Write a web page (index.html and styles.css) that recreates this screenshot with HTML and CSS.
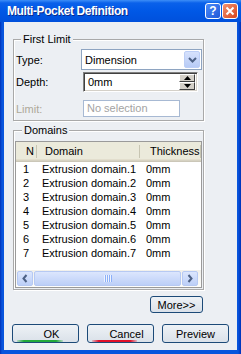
FILE: index.html
```html
<!DOCTYPE html>
<html lang="en">
<head>
<meta charset="UTF-8">
<meta name="viewport" content="width=device-width, initial-scale=1.0">
<title>Multi-Pocket Definition</title>
<link rel="stylesheet" href="styles.css">
</head>
<body>
<div class="window">
  <div class="titlebar">
    <span class="title">Multi-Pocket Definition</span>
    <div class="title-buttons">
      <span class="tbtn help">?</span>
      <span class="tbtn close">
        <svg width="10" height="10" viewBox="0 0 10 10"><path d="M1.5 1.5 L8.5 8.5 M8.5 1.5 L1.5 8.5" stroke="#fff" stroke-width="2" fill="none"/></svg>
      </span>
    </div>
  </div>

  <div class="client">
    <fieldset class="group first">
      <legend>First Limit</legend>
      <div class="row row-type">
        <label class="lbl">Type:</label>
        <div class="combo">
          <span class="combo-text">Dimension</span>
          <span class="drop">
            <svg width="9" height="6" viewBox="0 0 9 6"><path d="M1 1 L4.5 4.5 L8 1" stroke="#4d6185" stroke-width="2" fill="none"/></svg>
          </span>
        </div>
      </div>
      <div class="row row-depth">
        <label class="lbl">Depth:</label>
        <div class="spin">
          <span class="spin-text">0mm</span>
          <span class="spin-btns">
            <span class="sbtn"><svg width="7" height="4" viewBox="0 0 7 4"><path d="M0 4 L3.5 0 L7 4 Z" fill="#000"/></svg></span>
            <span class="sbtn"><svg width="7" height="4" viewBox="0 0 7 4"><path d="M0 0 L3.5 4 L7 0 Z" fill="#000"/></svg></span>
          </span>
        </div>
      </div>
      <div class="row row-limit">
        <label class="lbl disabled">Limit:</label>
        <div class="field disabled">No selection</div>
      </div>
    </fieldset>

    <fieldset class="group domains">
      <legend>Domains</legend>
      <div class="list">
        <div class="list-head">
          <span class="col c1">N</span>
          <span class="col c2">Domain</span>
          <span class="col c3">Thickness</span>
        </div>
        <div class="list-body">
          <div class="list-row"><span class="col c1">1</span><span class="col c2">Extrusion domain.1</span><span class="col c3">0mm</span></div>
          <div class="list-row"><span class="col c1">2</span><span class="col c2">Extrusion domain.2</span><span class="col c3">0mm</span></div>
          <div class="list-row"><span class="col c1">3</span><span class="col c2">Extrusion domain.3</span><span class="col c3">0mm</span></div>
          <div class="list-row"><span class="col c1">4</span><span class="col c2">Extrusion domain.4</span><span class="col c3">0mm</span></div>
          <div class="list-row"><span class="col c1">5</span><span class="col c2">Extrusion domain.5</span><span class="col c3">0mm</span></div>
          <div class="list-row"><span class="col c1">6</span><span class="col c2">Extrusion domain.6</span><span class="col c3">0mm</span></div>
          <div class="list-row"><span class="col c1">7</span><span class="col c2">Extrusion domain.7</span><span class="col c3">0mm</span></div>
        </div>
        <div class="hscroll">
          <span class="sarrow">
            <svg width="6" height="9" viewBox="0 0 6 9"><path d="M4.5 1 L1.5 4.5 L4.5 8" stroke="#4d6185" stroke-width="2" fill="none"/></svg>
          </span>
          <span class="thumb">
            <svg width="8" height="7" viewBox="0 0 8 7">
              <path d="M0.5 0 V7 M2.5 0 V7 M4.5 0 V7 M6.5 0 V7" stroke="#eef3fe" stroke-width="1"/>
              <path d="M1.5 0 V7 M3.5 0 V7 M5.5 0 V7 M7.5 0 V7" stroke="#8cb0f8" stroke-width="1"/>
            </svg>
          </span>
          <span class="sarrow">
            <svg width="6" height="9" viewBox="0 0 6 9"><path d="M1.5 1 L4.5 4.5 L1.5 8" stroke="#4d6185" stroke-width="2" fill="none"/></svg>
          </span>
        </div>
      </div>
    </fieldset>

    <div class="more-row">
      <button class="btn more">More&gt;&gt;</button>
    </div>

    <div class="actions">
      <button class="btn ok">OK</button>
      <button class="btn cancel">Cancel</button>
      <button class="btn">Preview</button>
    </div>
  </div>
</div>
</body>
</html>
```

FILE: styles.css
```css
body {
  margin: 0;
  font-family: "Liberation Sans", Arial, sans-serif;
  font-size: 11px;
  color: #000;
}
.window {
  width: 241px;
  height: 354px;
  display: flex;
  flex-direction: column;
  background: linear-gradient(to right, #0031b8 0, #0855dd 2px, #0855dd 238px, #0031b8 241px);
}

/* title bar */
.titlebar {
  height: 22px;
  display: flex;
  align-items: center;
  padding: 0 3px 0 7px;
  background: linear-gradient(#3d8ef7 0, #0a61ea 3px, #0058e6 50%, #0050dc 100%);
}
.title {
  color: #fff;
  font-weight: bold;
  font-size: 12px;
  letter-spacing: -0.4px;
  text-shadow: 1px 1px 0 #0a2a8c;
}
.title-buttons {
  margin-left: auto;
  display: flex;
  gap: 1px;
}
.tbtn {
  width: 16px;
  height: 16px;
  box-sizing: border-box;
  border: 1px solid #fff;
  border-radius: 3px;
  display: flex;
  align-items: center;
  justify-content: center;
}
.help {
  background: linear-gradient(135deg, #4d8cf9, #1f57d8);
  color: #fff;
  font-weight: bold;
  font-size: 12px;
}
.close {
  background: linear-gradient(135deg, #f19272, #d8451d);
}

/* client area */
.client {
  flex: 1;
  margin: 0 4px 4px 4px;
  background: #eceff3;
  display: flex;
  flex-direction: column;
}
.group {
  width: 191px;
  box-sizing: border-box;
  margin: 0 0 0 9px;
  min-inline-size: 0;
  border: 1px solid #a9a9a9;
  box-shadow: 1px 1px 0 #fff, inset 1px 1px 0 #fff;
}
.group legend {
  padding: 0 2px;
  line-height: 13px;
  background: #eceff3;
}
.first {
  margin-top: 11px;
  padding: 0 0 3px 1px;
}
.first legend {
  margin-left: 6px;
}
.row {
  display: flex;
  align-items: center;
}
.row-type { margin-top: 3px; }
.row-depth { margin-top: 2px; }
.row-limit { margin-top: 8px; }
.lbl {
  width: 66px;
  padding-left: 1px;
  box-sizing: border-box;
}
.lbl.disabled { color: #aca899; }

.combo {
  width: 121px;
  height: 21px;
  box-sizing: border-box;
  border: 1px solid #8ea4c1;
  background: #fff;
  display: flex;
  align-items: center;
  padding-left: 3px;
}
.combo-text { flex: 1; }
.drop {
  width: 16px;
  height: 17px;
  margin-right: 1px;
  box-sizing: border-box;
  border: 1px solid #bccef6;
  border-radius: 2px;
  background: linear-gradient(#d6e1fc, #b7cbf6);
  display: flex;
  align-items: center;
  justify-content: center;
}

.spin {
  width: 115px;
  height: 20px;
  margin-left: 2px;
  box-sizing: border-box;
  border: 1px solid;
  border-color: #808080 #fff #fff #808080;
  box-shadow: inset 1px 1px 0 #404040, inset -1px -1px 0 #d4d0c8;
  background: #fff;
  display: flex;
  align-items: center;
  padding-left: 4px;
}
.spin-text { flex: 1; }
.spin-btns {
  width: 16px;
  height: 16px;
  margin-right: 2px;
  display: flex;
  flex-direction: column;
}
.sbtn {
  flex: 1;
  box-sizing: border-box;
  background: #d4d0c8;
  border: 1px solid;
  border-color: #fff #404040 #404040 #fff;
  display: flex;
  align-items: center;
  justify-content: center;
}

.field {
  width: 97px;
  height: 17px;
  margin-left: 2px;
  box-sizing: border-box;
  border: 1px solid #a7b9d3;
  background: #fff;
  padding-left: 3px;
  line-height: 15px;
}
.field.disabled { color: #a3a3a3; }

/* domains */
.domains {
  margin-top: 3px;
  padding: 0 1px 1px 1px;
}
.domains legend {
  margin-left: 7px;
}
.list {
  margin-top: 4px;
  width: 187px;
  height: 147px;
  box-sizing: border-box;
  border: 1px solid #9a9a9a;
  background: #fff;
  display: flex;
  flex-direction: column;
}
.list-head {
  height: 20px;
  display: flex;
  align-items: center;
  background: #ebeadb;
  box-shadow: inset 0 -1px 0 #cbc7b8, inset 0 -2px 0 #d6d2c2, inset 0 -3px 0 #e2decd;
}
.col {
  box-sizing: border-box;
  white-space: nowrap;
  overflow: hidden;
}
.c1 { width: 21px; }
.c2 { width: 103px; }
.c3 { flex: 1; }
.list-head .col {
  height: 100%;
  line-height: 19px;
  background: linear-gradient(#c7c5b2, #c7c5b2) no-repeat right 3px / 1px 13px;
}
.list-head .c1 { padding: 0 2px 0 10px; }
.list-head .c2 { padding-left: 8px; }
.list-head .c3 { padding-left: 10px; }
.list-body { flex: 1; }
.list-row {
  display: flex;
  height: 14px;
  line-height: 14px;
}
.list-row .c1 { padding-left: 7px; }
.list-row .c2 { padding-left: 5px; }
.list-row .c3 { padding-left: 6px; }

.hscroll {
  height: 17px;
  box-sizing: border-box;
  padding: 1px 3px 1px 1px;
  display: flex;
  gap: 1px;
  background: linear-gradient(#f1f0eb, #fdfdfb);
}
.sarrow, .thumb {
  box-sizing: border-box;
  border: 1px solid #b6c9f3;
  border-radius: 2px;
  background: linear-gradient(to bottom, #dce6fd, #bccff8);
  display: flex;
  align-items: center;
  justify-content: center;
}
.sarrow { width: 16px; }
.thumb { flex: 1; }

/* buttons */
.btn {
  font-family: "Liberation Sans", Arial, sans-serif;
  font-size: 11px;
  color: #000;
  padding: 0;
  border: 1px solid #1c4a78;
  border-radius: 3px;
  background: linear-gradient(#eef2f6, #dae1e9);
  cursor: pointer;
}
.more-row {
  width: 191px;
  margin: 6px 0 0 9px;
  display: flex;
  justify-content: flex-end;
}
.more {
  width: 53px;
  height: 17px;
  margin-right: 1px;
}
.actions {
  margin: 11px 0 0 8px;
  display: flex;
  gap: 8px;
}
.actions .btn {
  width: 67px;
  height: 19px;
}
.actions .ok {
  padding-left: 12px;
  background:
    linear-gradient(to right, rgba(34,170,58,0.2), #22aa3a 15%, #22aa3a 85%, rgba(34,170,58,0.2)) no-repeat 4px 100% / 46px 2px,
    linear-gradient(#eef2f6, #dae1e9);
}
.actions .cancel {
  padding-left: 12px;
  background:
    linear-gradient(to right, rgba(224,16,42,0.2), #e0102a 15%, #e0102a 85%, rgba(224,16,42,0.2)) no-repeat 4px 100% / 45px 2px,
    linear-gradient(#eef2f6, #dae1e9);
}
```
